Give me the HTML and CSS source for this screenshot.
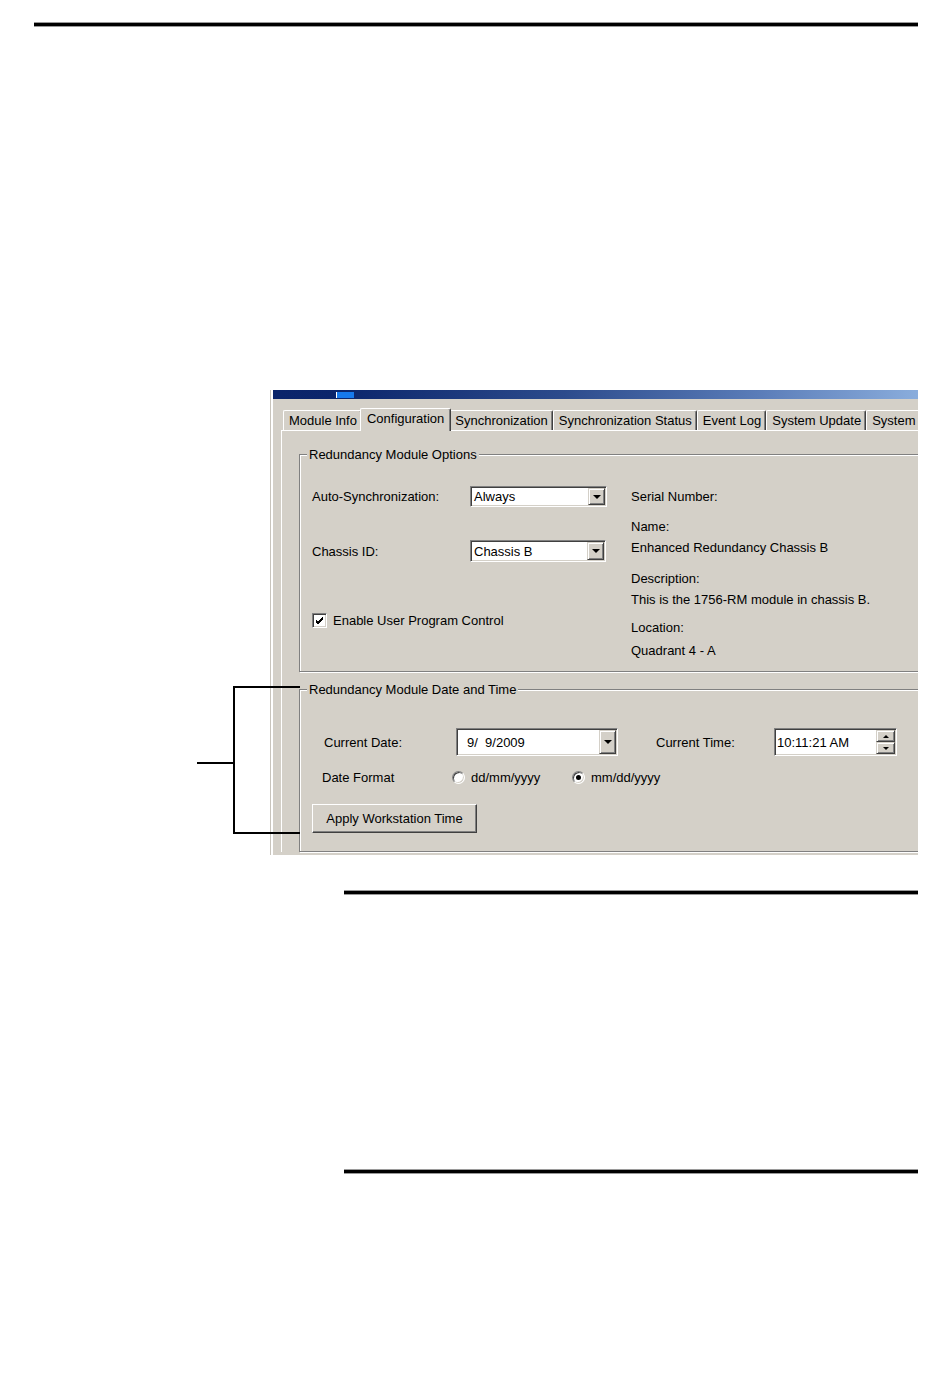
FILE: index.html
```html
<!DOCTYPE html>
<html lang="en">
<head>
<meta charset="utf-8">
<title>Redundancy Module Configuration</title>
<link rel="stylesheet" href="styles.css">
</head>
<body>
<div class="page">
  <div class="rule rule-top"></div>

  <div class="figure">
    <div class="window">
      <div class="titlebar"><span class="title-mark"></span></div>
      <div class="dialog">
        <div class="tabs">
          <div class="tab">Module Info</div>
          <div class="tab active">Configuration</div>
          <div class="tab">Synchronization</div>
          <div class="tab">Synchronization Status</div>
          <div class="tab">Event Log</div>
          <div class="tab">System Update</div>
          <div class="tab tab-last">System</div>
        </div>

        <div class="tabpage">
          <fieldset class="group">
            <legend>Redundancy Module Options</legend>
            <div class="options">
              <div class="opt-left">
                <div class="field">
                  <span class="label label-sync">Auto-Synchronization:</span>
                  <div class="combo combo-sync">
                    <span class="combo-text">Always</span>
                    <span class="drop-btn"><span class="arrow"></span></span>
                  </div>
                </div>
                <div class="field field-chassis">
                  <span class="label label-sync">Chassis ID:</span>
                  <div class="combo combo-chassis">
                    <span class="combo-text">Chassis B</span>
                    <span class="drop-btn"><span class="arrow"></span></span>
                  </div>
                </div>
                <div class="field field-check">
                  <span class="checkbox">
                    <svg width="9" height="9" viewBox="0 0 9 9"><path d="M1 4 L3 6 L8 1 M1 5 L3 7 L8 2 M1 6 L3 8 L8 3" fill="none" stroke="#000" stroke-width="1"/></svg>
                  </span>
                  <span class="check-text">Enable User Program Control</span>
                </div>
              </div>
              <div class="opt-right">
                <div class="info info-serial">Serial Number:</div>
                <div class="info info-gap1">Name:</div>
                <div class="info">Enhanced Redundancy Chassis B</div>
                <div class="info info-gap2">Description:</div>
                <div class="info">This is the 1756-RM module in chassis B.</div>
                <div class="info info-gap3">Location:</div>
                <div class="info info-last">Quadrant 4 - A</div>
              </div>
            </div>
          </fieldset>

          <fieldset class="group group-time">
            <legend>Redundancy Module Date and Time</legend>
            <div class="timebox">
              <div class="time-row">
                <span class="label label-date">Current Date:</span>
                <div class="combo combo-date">
                  <span class="combo-text date-text">9/  9/2009</span>
                  <span class="drop-btn"><span class="arrow"></span></span>
                </div>
                <span class="label label-time">Current Time:</span>
                <div class="combo spinner">
                  <span class="combo-text time-text">10:11:21 AM</span>
                  <span class="spin">
                    <span class="spin-btn"><span class="arrow-up"></span></span>
                    <span class="spin-btn"><span class="arrow-down"></span></span>
                  </span>
                </div>
              </div>
              <div class="format-row">
                <span class="label label-format">Date Format</span>
                <span class="radio-item radio-first"><span class="radio"></span><span>dd/mm/yyyy</span></span>
                <span class="radio-item"><span class="radio checked"></span><span>mm/dd/yyyy</span></span>
              </div>
              <div class="button-row">
                <div class="button">Apply Workstation Time</div>
              </div>
            </div>
          </fieldset>
        </div>
      </div>
    </div>

    <div class="callout"></div>
    <div class="callout-stub"></div>
  </div>

  <div class="rule rule-mid"></div>
  <div class="rule rule-end"></div>
</div>
</body>
</html>
```

FILE: styles.css
```css
* {
  box-sizing: border-box;
}

body {
  margin: 0;
  background: #fff;
  font-family: "Liberation Sans", Arial, sans-serif;
  font-size: 13px;
  color: #000;
}

.page {
  width: 950px;
  height: 1398px;
  padding-top: 1px;
}

/* page rules */
.rule {
  height: 3px;
  background: #000;
  box-shadow: 0 -1px 0 #9a9a9a, 0 1px 0 #9a9a9a;
  margin-left: 344px;
  width: 574px;
}

.rule-top {
  margin-top: 22px;
  margin-left: 34px;
  width: 884px;
}

.rule-mid {
  margin-top: 36px;
}

.rule-end {
  margin-top: 276px;
}

/* figure with the dialog capture and its callout bracket */
.figure {
  position: relative;
  margin-top: 364px;
  height: 465px;
}

.window {
  margin-left: 270px;
  width: 648px;
  height: 465px;
  overflow: hidden;
  border-left: 1px solid #c8c4bc;
  padding-left: 2px;
  background: #fff;
  display: flex;
  flex-direction: column;
}

.titlebar {
  height: 9px;
  flex: none;
  display: flex;
  background: linear-gradient(90deg, #0a246a 0%, #0b256b 10%, #2c4b8c 45%, #5a7cb8 75%, #8aaddc 100%);
}

.title-mark {
  margin-left: 63px;
  margin-top: 2px;
  width: 18px;
  height: 6px;
  background: #1679ec;
  border-left: 1px solid #fff;
}

.dialog {
  flex: 1;
  background: #d4d0c8;
  padding: 9px 0 0 8px;
}

/* tab strip */
.tabs {
  display: flex;
  align-items: flex-end;
  height: 22px;
  padding-left: 2px;
  white-space: nowrap;
}

.tab {
  flex: none;
  height: 20px;
  line-height: 20px;
  padding: 0 4px 0 5px;
  border-top: 1px solid #fff;
  border-left: 1px solid #fff;
  border-right: 1px solid #404040;
  border-radius: 2px 2px 0 0;
  box-shadow: inset -1px 0 0 #808080;
  background: #d4d0c8;
}

.tab.active {
  position: relative;
  z-index: 1;
  height: 23px;
  line-height: 19px;
  margin: 0 -2px -1px;
  padding: 0 6px;
}

.tab-last {
  padding-right: 30px;
}

.tabpage {
  border-top: 1px solid #fff;
  border-left: 1px solid #fff;
  padding: 16px 0 0 17px;
}

/* group boxes */
.group {
  margin: 0;
  padding: 0;
  width: 640px;
  border: 1px solid #808080;
  box-shadow: inset 1px 1px 0 #fff, 1px 1px 0 #fff;
  min-width: 0;
}

.group legend {
  margin-left: 7px;
  padding: 0 2px;
  line-height: 15px;
  background: #d4d0c8;
}

.group-time {
  margin-top: 10px;
}

.options {
  display: flex;
  padding: 24px 0 9px 12px;
}

.opt-left {
  width: 319px;
  flex: none;
}

.field {
  display: flex;
  align-items: center;
  height: 21px;
}

.field-chassis {
  margin-top: 33px;
  height: 22px;
}

.field-check {
  margin-top: 48px;
}

.label {
  flex: none;
}

.label-sync {
  width: 158px;
}

.opt-right {
  flex: 1;
}

.info {
  line-height: 21px;
  white-space: nowrap;
}

.info-gap1 { margin-top: 9px; }
.info-gap2 { margin-top: 10px; }
.info-gap3 { margin-top: 7px; }
.info-last { line-height: 22px; margin-top: 2px; }

/* sunken edit / combo boxes */
.combo {
  display: flex;
  align-items: stretch;
  height: 21px;
  background: #fff;
  border: 1px solid;
  border-color: #808080 #fff #fff #808080;
  box-shadow: inset 1px 1px 0 #404040, inset -1px -1px 0 #d4d0c8;
  padding: 1px;
}

.combo-sync { width: 137px; }
.combo-chassis { width: 136px; height: 22px; }
.combo-date { width: 162px; height: 28px; }
.spinner { width: 123px; height: 28px; }

.combo-text {
  flex: 1;
  padding-left: 2px;
  display: flex;
  align-items: center;
  white-space: pre;
}

.date-text { padding-left: 9px; }
.time-text { padding-left: 1px; }

.drop-btn {
  width: 17px;
  flex: none;
  display: flex;
  align-items: center;
  justify-content: center;
  background: #d4d0c8;
  border: 1px solid;
  border-color: #d4d0c8 #404040 #404040 #d4d0c8;
  box-shadow: inset 1px 1px 0 #fff, inset -1px -1px 0 #808080;
}

.arrow {
  width: 0;
  height: 0;
  border-left: 4px solid transparent;
  border-right: 4px solid transparent;
  border-top: 4px solid #000;
}

.spin {
  width: 19px;
  flex: none;
  display: flex;
  flex-direction: column;
}

.spin-btn {
  flex: 1;
  display: flex;
  align-items: center;
  justify-content: center;
  background: #d4d0c8;
  border: 1px solid;
  border-color: #d4d0c8 #404040 #404040 #d4d0c8;
  box-shadow: inset 1px 1px 0 #fff, inset -1px -1px 0 #808080;
}

.arrow-up {
  width: 0;
  height: 0;
  border-left: 3px solid transparent;
  border-right: 3px solid transparent;
  border-bottom: 3px solid #000;
}

.arrow-down {
  width: 0;
  height: 0;
  border-left: 3px solid transparent;
  border-right: 3px solid transparent;
  border-top: 3px solid #000;
}

/* checkbox and radio buttons */
.checkbox {
  width: 15px;
  height: 15px;
  flex: none;
  display: flex;
  align-items: center;
  justify-content: center;
  background: #fff;
  border: 1px solid;
  border-color: #808080 #fff #fff #808080;
  box-shadow: inset 1px 1px 0 #404040, inset -1px -1px 0 #d4d0c8;
}

.check-text {
  margin-left: 6px;
}

.radio {
  width: 13px;
  height: 13px;
  flex: none;
  border-radius: 50%;
  background: #fff;
  border: 1px solid;
  border-color: #808080 #fff #fff #808080;
  box-shadow: inset 1px 1px 0 #404040, inset -1px -1px 0 #d4d0c8;
  display: flex;
  align-items: center;
  justify-content: center;
}

.radio.checked::after {
  content: "";
  width: 5px;
  height: 5px;
  border-radius: 50%;
  background: #000;
}

/* date and time group */
.timebox {
  padding: 31px 0 18px 24px;
}

.time-row {
  display: flex;
  align-items: center;
  height: 28px;
}

.label-date { width: 132px; }

.label-time {
  width: 118px;
  margin-left: 38px;
}

.format-row {
  display: flex;
  align-items: center;
  height: 21px;
  margin-top: 11px;
  margin-left: -2px;
}

.label-format { width: 130px; }

.radio-item {
  display: flex;
  align-items: center;
  gap: 6px;
}

.radio-first { width: 120px; }

.button-row {
  margin-top: 16px;
  margin-left: -12px;
}

.button {
  width: 165px;
  height: 29px;
  line-height: 27px;
  text-align: center;
  background: #d4d0c8;
  border: 1px solid;
  border-color: #fff #404040 #404040 #fff;
  box-shadow: inset -1px -1px 0 #808080;
}

/* callout bracket pointing at the date/time group */
.callout {
  position: absolute;
  left: 233px;
  top: 296px;
  width: 67px;
  height: 148px;
  border: 2px solid #000;
  border-right: none;
}

.callout-stub {
  position: absolute;
  left: 197px;
  top: 372px;
  width: 36px;
  height: 2px;
  background: #000;
}
```
